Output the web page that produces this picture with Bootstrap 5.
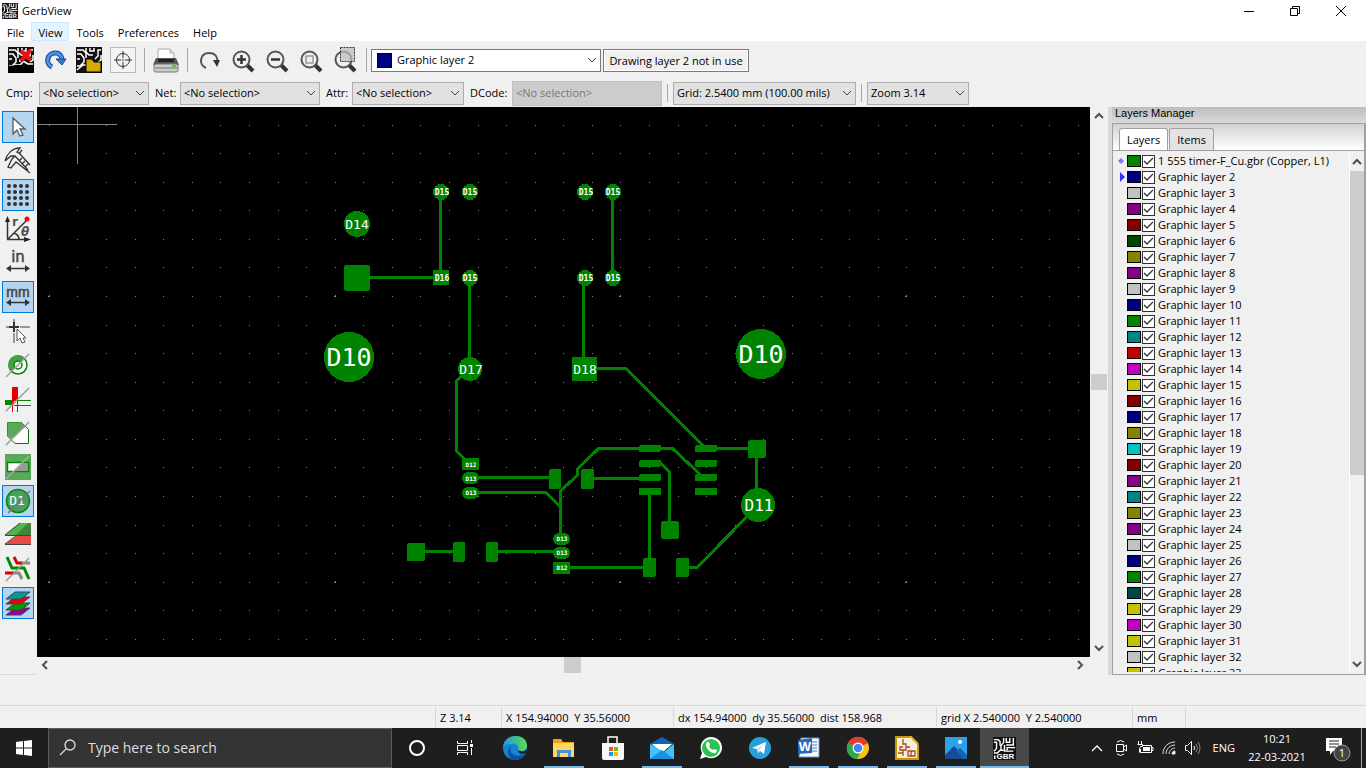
<!DOCTYPE html>
<html lang="en">
<head>
<meta charset="utf-8">
<meta name="viewport" content="width=device-width, initial-scale=1">
<title>GerbView</title>
<link href="https://cdn.jsdelivr.net/npm/bootstrap@5.3.0/dist/css/bootstrap.min.css" rel="stylesheet">
<style>
  body { font-family: "Open Sans", "Noto Sans", sans-serif; font-size: 11px; line-height: 16px; color: #000; background: #f0f0f0; }
  button { color: inherit; }
  svg { display: block; }
  .title-row { height: 22px; padding: 0 2px; }
  .win-btn { width: 46px; height: 22px; }
  .menu-row { height: 19px; }
  .menu-row a { color: #000; text-decoration: none; height: 19px; line-height: 22px; padding: 0 7px; }
  .menu-row li:nth-child(2) a { background: #e5f3ff; box-shadow: inset 0 0 0 1px #cce8ff; }
  .tool-row { height: 38px; padding-left: 4px; }
  .tool-btn { width: 34px; height: 34px; }
  .vline { width: 1px; background: #a8a8a8; }
  .tool-row .vline { height: 24px; }
  .filter-row { height: 28px; }
  .filter-row .vline { height: 18px; margin: 0 5px; }
  .form-select { font-size: 11px; line-height: 16px; height: 23px; padding: 0 20px 0 3px; color: #000; border: 1px solid #adadad; border-radius: 0; background-color: #e1e1e1; background-position: right 3px center; background-size: 10px 10px;
    background-image: url("data:image/svg+xml,%3Csvg xmlns='http://www.w3.org/2000/svg' viewBox='0 0 10 10'%3E%3Cpath d='M1 3l4 4 4-4' fill='none' stroke='%23444'/%3E%3C/svg%3E"); }
  .form-select:disabled { background-color: #ccc; border-color: #bfbfbf; color: #777; background-image: none; height: 25px; }
  .layer-pick { width: 230px; }
  .layer-pick .form-select { background-color: #fff; border-color: #7a7a7a; padding-left: 25px; }
  .layer-pick .chip { left: 6px; top: 4px; width: 15px; height: 15px; background: #000084; border: 1px solid #000; }
  .layer-note { border: 1px solid #7a7a7a; box-shadow: inset 0 0 0 1px #fff; height: 23px; width: 146px; line-height: 21px; margin-left: 2px; }
  .w110 { width: 110px; } .w140 { width: 140px; } .w112 { width: 112px; } .w150 { width: 150px; } .w183 { width: 183px; } .w102 { width: 102px; }
  .lab { padding-left: 6px; white-space: nowrap; }
  .lab-cmp { width: 39px; } .lab-net { width: 31px; } .lab-attr { width: 32px; } .lab-dcode { width: 48px; }
  .side-tools { width: 37px; padding: 4px 0 0 2px; gap: 2px; border-bottom: 1px solid #d9d9d9; }
  .side-tools button { width: 32px; height: 32px; padding: 2px; background: none; border: 1px solid transparent; }
  .side-tools svg { overflow: visible; }
  .side-tools .on { background: #b4d5f2; border-color: #0078d7; }
  .board { background: #000; }
  .board text { font-family: "DejaVu Sans Mono", monospace; fill: #fff; text-anchor: middle; }
  .sb-v { width: 18px; padding: 4px 1px; }
  .sb-h { height: 18px; padding: 0 4px; }
  .thumb { background: #cdcdcd; }
  .thumb-v { height: 16px; } .thumb-h { width: 17px; height: 16px; } .thumb-list { height: 59%; }
  .manager { width: 258px; border-left: 4px solid #d8d8d8; }
  .caption-bar { height: 16px; padding-left: 3px; line-height: 13px; font-family: "Liberation Sans", Arial, sans-serif; font-size: 11px; background: linear-gradient(#bdbdbd, #dadada); }
  .panel-frame { border: 1px solid #a0a0a0; border-right-width: 2px; }
  .tab-strip { height: 27px; padding: 4px 0 0 6px; background: linear-gradient(#d2d2d2, #fff); border-bottom: 1px solid #a0a0a0; gap: 1px; }
  .tab-strip button { border: 1px solid #a0a0a0; border-bottom: 0; border-radius: 3px 3px 0 0; background: #e3e3e3; height: 22px; padding: 0 7px; line-height: 20px; }
  .tab-strip .active { background: #fff; }
  .list-area { padding: 2px 0; }
  .layer-row { height: 16px; padding-left: 5px; }
  .layer-row .tick-mark { width: 9px; height: 16px; }
  .layer-row .chip { width: 14px; height: 12px; border: 1px solid #000; margin-right: 1px; }
  .layer-row input { appearance: none; width: 13px; height: 13px; margin: 0 3px 0 0; border: 1px solid #333; background: #fff url("data:image/svg+xml,%3Csvg xmlns='http://www.w3.org/2000/svg' viewBox='0 0 11 11'%3E%3Cpath d='M1 5l3 3 6-6' fill='none' stroke='%23333' stroke-width='1.3'/%3E%3C/svg%3E"); }
  .list-bar { width: 15px; border-left: 1px solid #fff; padding-top: 4px; }
  .status-row { height: 23px; margin-top: 30px; border-top: 1px solid #d7d7d7; }
  .status-row div { border-left: 1px solid #d7d7d7; padding: 3px 4px 0; margin-top: 1px; white-space: pre; height: 20px; }
  .s66 { width: 66px; } .s172 { width: 172px; } .s263 { width: 263px; } .s197 { width: 196px; } .s53 { width: 53px; } .s181 { width: 181px; }
  .task-row { height: 40px; background: #1e1e1e; color: #fff; }
  .task-btn { width: 49px; height: 40px; }
  .task-btn.run { background: linear-gradient(#76b9ed, #76b9ed) center bottom / 40px 2px no-repeat; }
  .task-btn.now { background: linear-gradient(#76b9ed, #76b9ed) center bottom / 100% 2px no-repeat #484848; }
  .start-btn { width: 48px; }
  .search-box { width: 344px; background: #333; border: 1px solid #5a5a5a; padding-left: 10px; }
  .search-box input { font-size: 14px; color: #ddd; background: none; padding-left: 11px; }
  .search-box input::placeholder { color: #ddd; opacity: 1; }
  .tray-btn { width: 24px; height: 40px; }
  .clock { width: 76px; text-align: center; line-height: 18px; }
</style>
</head>
<body class="vh-100 overflow-hidden d-flex flex-column">

<svg class="d-none">
  <symbol id="pcb" viewBox="0 0 26 26">
    <rect width="26" height="26" fill="#111"/>
    <path d="M1 3h6l3 3v5M1 7h4l3 4v4l-4 4H1M1 12h3M10 1v4l3 3h4M14 1v3h4V1M25 3h-3v6l-3 3M25 8v5l-3 2M25 17h-5l-5-3M1 23l6-5h5l3-3M12 12v3" fill="none" stroke="#fff" stroke-width="1.500"/>
  </symbol>
  <symbol id="gbr" viewBox="0 0 26 26">
    <rect width="26" height="26" fill="#111"/>
    <path d="M1 3h5l2 2v5M1 6h3v7l-3 3M12 1v5l-3 4v5M15 1v5h4V1M23 1v8h-8M25 12h-9v3M1 18h4l3-3h4M13 9v7h10M2 21v4" fill="none" stroke="#fff" stroke-width="1.600"/>
    <text x="14" y="25" font-family="Liberation Sans, sans-serif" font-size="9" font-weight="700" text-anchor="middle" fill="#fff">GBR</text>
  </symbol>
  <symbol id="up" viewBox="0 0 16 16"><path d="M4 10l4-4 4 4" fill="none" stroke="#505050" stroke-width="2"/></symbol>
  <symbol id="down" viewBox="0 0 16 16"><path d="M4 6l4 4 4-4" fill="none" stroke="#505050" stroke-width="2"/></symbol>
  <symbol id="left" viewBox="0 0 16 16"><path d="M10 4L6 8l4 4" fill="none" stroke="#505050" stroke-width="2"/></symbol>
  <symbol id="right" viewBox="0 0 16 16"><path d="M6 4l4 4-4 4" fill="none" stroke="#505050" stroke-width="2"/></symbol>
  <symbol id="lens" viewBox="0 0 26 26"><path d="M17 18l6 6" stroke="#333" stroke-width="4"/><circle cx="11.500" cy="12.500" r="8" fill="#f0f0f0" stroke="#545454" stroke-width="2"/></symbol>
</svg>

<header class="bg-white flex-shrink-0">
  <div class="title-row d-flex align-items-center">
    <svg class="me-1" width="16" height="16"><use href="#gbr"/></svg>
    <span class="flex-grow-1">GerbView</span>
    <button class="win-btn btn p-0 border-0 rounded-0 d-flex align-items-center justify-content-center" aria-label="Minimize"><svg width="12" height="12"><path d="M1 6.500h10" stroke="#000"/></svg></button>
    <button class="win-btn btn p-0 border-0 rounded-0 d-flex align-items-center justify-content-center" aria-label="Restore"><svg width="12" height="12" fill="none" stroke="#000"><path d="M1.500 3.500h7v7h-7zM3.500 3v-1.500h7v7H9"/></svg></button>
    <button class="win-btn btn p-0 border-0 rounded-0 d-flex align-items-center justify-content-center" aria-label="Close"><svg width="12" height="12"><path d="M1 1l10 10M11 1L1 11" stroke="#000"/></svg></button>
  </div>
  <ul class="menu-row list-unstyled d-flex m-0">
    <li><a class="d-block" href="#">File</a></li><li><a class="d-block" href="#">View</a></li><li><a class="d-block" href="#">Tools</a></li><li><a class="d-block" href="#">Preferences</a></li><li><a class="d-block" href="#">Help</a></li>
  </ul>
</header>

<div class="tool-row d-flex align-items-center flex-shrink-0">
  <button class="tool-btn btn p-1 border-0" aria-label="Clear all layers"><svg width="26" height="26"><use href="#pcb"/><path d="M0 19q5 0 7-1h19v8H0z" fill="#000"/><path d="M13 4l10 9M23 3L13 14" stroke="#e11" stroke-width="4"/></svg></button>
  <button class="tool-btn btn p-1 border-0" aria-label="Reload"><svg width="26" height="26"><path d="M10 20C2 16 6 5 14 6c4 0 6 4 6 7" fill="none" stroke="#164a9c" stroke-width="5"/><path d="M10 20C2 16 6 5 14 6c4 0 6 4 6 7" fill="none" stroke="#4a90e8" stroke-width="3"/><path d="M14 12h10l-4 6z" fill="#3478d8" stroke="#164a9c"/></svg></button>
  <button class="tool-btn btn p-1 border-0" aria-label="Open Gerber file"><svg width="26" height="26"><use href="#pcb"/><path d="M10 12h6l2 3h7v10H10z" fill="#d4aa00" stroke="#000"/></svg></button>
  <button class="tool-btn btn p-1 border-0" aria-label="Open drill file"><svg width="26" height="26" fill="none" stroke="#333"><path d="M.5.5h25v25H.5z" fill="#f3f3f3" stroke="#b8b8b8"/><circle cx="13" cy="13" r="6.500"/><path d="M4 13h7M15 13h7M13 4v7M13 15v7M12 13h2"/></svg></button>
  <span class="vline mx-1"></span>
  <button class="tool-btn btn p-1 border-0" aria-label="Print"><svg width="26" height="26"><path d="M5 11V2h12l4 4v7" fill="#fff" stroke="#aaa"/><path d="M17 2v4h4" fill="#ddd" stroke="#aaa"/><path d="M3 11h20l3 7H0z" fill="#555"/><path d="M5 12h16v3H5z" fill="#222"/><rect x="1" y="17" width="24" height="8" rx="2" fill="#ccc" stroke="#777"/><path d="M2 21h22" stroke="#777"/><path d="M19 19h4" stroke="#5c2" stroke-width="2"/></svg></button>
  <span class="vline mx-1"></span>
  <button class="tool-btn btn p-1 border-0" aria-label="Redraw"><svg width="26" height="26"><path d="M10 21C2 18 4 6 13 6c7 0 9 5 8 9" fill="none" stroke="#545454" stroke-width="2"/><path d="M17 13h7l-3 7z" fill="#333"/></svg></button>
  <button class="tool-btn btn p-1 border-0" aria-label="Zoom in"><svg width="26" height="26"><use href="#lens"/><path d="M7 12.500h9M11.500 8v9" stroke="#333" stroke-width="2.500"/></svg></button>
  <button class="tool-btn btn p-1 border-0" aria-label="Zoom out"><svg width="26" height="26"><use href="#lens"/><path d="M7 12.500h9" stroke="#333" stroke-width="2.500"/></svg></button>
  <button class="tool-btn btn p-1 border-0" aria-label="Zoom to fit"><svg width="26" height="26"><use href="#lens"/><path d="M8 9h7v7H8z" fill="#eee" stroke="#999" stroke-width="1.500"/></svg></button>
  <button class="tool-btn btn p-1 border-0" aria-label="Zoom to selection"><svg width="26" height="26"><use href="#lens"/><path d="M8.500.5h14v14h-14z" fill="#bbb" fill-opacity=".7" stroke="#333" stroke-dasharray="2 1"/></svg></button>
  <span class="vline mx-1"></span>
  <div class="layer-pick position-relative">
    <select class="form-select" aria-label="Active layer"><option>Graphic layer 2</option></select>
    <span class="chip position-absolute"></span>
  </div>
  <div class="layer-note text-center text-nowrap">Drawing layer 2 not in use</div>
</div>

<div class="filter-row d-flex align-items-center flex-shrink-0">
  <label class="lab lab-cmp" for="cmp">Cmp:</label><select id="cmp" class="form-select w110"><option>&lt;No selection&gt;</option></select>
  <label class="lab lab-net" for="net">Net:</label><select id="net" class="form-select w140"><option>&lt;No selection&gt;</option></select>
  <label class="lab lab-attr" for="attr">Attr:</label><select id="attr" class="form-select w112"><option>&lt;No selection&gt;</option></select>
  <label class="lab lab-dcode" for="dcode">DCode:</label><select id="dcode" class="form-select w150" disabled><option>&lt;No selection&gt;</option></select>
  <span class="vline"></span>
  <select class="form-select w183" aria-label="Grid"><option>Grid: 2.5400 mm (100.00 mils)</option></select>
  <span class="vline"></span>
  <select class="form-select w102" aria-label="Zoom"><option>Zoom 3.14</option></select>
</div>

<main class="d-flex flex-fill overflow-hidden">
  <div class="side-tools d-flex flex-column flex-shrink-0">
    <button class="on" aria-label="Select"><svg width="26" height="26"><path d="M8 4v16l4-4 3 6 3-1-3-6h5z" fill="#fff" stroke="#555" stroke-width="1.300"/></svg></button>
    <button aria-label="Measure"><svg width="26" height="26" fill="none" stroke="#333" stroke-width="1.300"><path d="M0 13C2 6 7 0 15 0l-3 4 3 2 10 11M0 13l6-5h4l13 14M10 8L7 11l-4 8 3 1 5-6 14 11M17 2l-3 4M14 13l3-3M17 16l3-3M20 19l3-3"/></svg></button>
    <button class="on" aria-label="Show grid"><svg width="26" height="26"><path d="M4 4h19M4 10h19M4 16h19M4 22h19" stroke="#333" stroke-width="4" stroke-linecap="round" stroke-dasharray="0 6"/></svg></button>
    <button aria-label="Polar coordinates"><svg width="26" height="26"><path d="M2.500 23V3M2 23.500h21M3 23L22 4M9 17q5 2 5 6" fill="none" stroke="#333" stroke-width="1.500"/><path d="M0 6l2.500-6L5 6zM19 21l7 2.500-7 2.500z" fill="#222"/><circle cx="22" cy="3" r="2.500" fill="#f00"/><text x="7" y="10" font-family="DejaVu Sans" font-size="12" font-weight="700" fill="#555">r</text><text x="16" y="20" font-family="DejaVu Sans" font-size="12" font-weight="700" font-style="italic" fill="#555">θ</text></svg></button>
    <button aria-label="Inches"><svg width="26" height="26"><text x="13" y="12" text-anchor="middle" font-family="DejaVu Sans" font-size="15" fill="#444" stroke="#444" stroke-width=".5">in</text><path d="M3 18.500h20" stroke="#333" stroke-width="1.500"/><path d="M6 15l-5 3.500L6 22zM20 15l5 3.500-5 3.500z" fill="#333"/></svg></button>
    <button class="on" aria-label="Millimeters"><svg width="26" height="26"><text x="13" y="13" text-anchor="middle" font-family="Liberation Sans" font-size="14" fill="#444" stroke="#444" stroke-width=".5">mm</text><path d="M3 18.500h20" stroke="#333" stroke-width="1.500"/><path d="M6 15l-5 3.500L6 22zM20 15l5 3.500-5 3.500z" fill="#333"/></svg></button>
    <button aria-label="Cursor shape"><svg width="26" height="26"><path d="M9 1v3M9 15v10M1 9h3M15 9h10" stroke="#999" stroke-width="2"/><path d="M9 4v10M4 9h10" stroke="#333" stroke-width="2"/><path d="M12 11v12l3-3 2 5 3-1-2-4h3z" fill="#fff" stroke="#555"/></svg></button>
    <button aria-label="Sketch flashed items"><svg width="26" height="26"><circle cx="13" cy="13" r="9" fill="#fff" stroke="#0b840b" stroke-width="1.500"/><path d="M6 20A9 9 0 0 1 20 6z" fill="#46a046"/><circle cx="13" cy="13" r="4" fill="#e8f3e8" stroke="#0b840b" stroke-width="1.500"/><path d="M1 25L24 2" stroke="#a0a0a0" stroke-width="1.500"/></svg></button>
    <button aria-label="Sketch lines"><svg width="26" height="26"><path d="M0 14h9v5H0z" fill="#080"/><path d="M9 14.500h17M9 19.500h17" stroke="#080"/><path d="M7 1h6v14H7z" fill="#d00"/><path d="M7.500 14v12M12.500 14v12" stroke="#d00"/><path d="M1 25L24 2" stroke="#999" stroke-width="1.500"/></svg></button>
    <button aria-label="Sketch polygons"><svg width="26" height="26"><path d="M2.500 2.500h14l7 7v14H10l-7.500-7.500z" fill="#fff" stroke="#0b770b"/><path d="M2.500 2.500h14l4 4L6 19l-3.500-3z" fill="#5aa95a"/><path d="M1 25L24 2" stroke="#999" stroke-width="1.500"/></svg></button>
    <button aria-label="Negative objects"><svg width="26" height="26"><path d="M0 0h26v26H0z" fill="#5aa95a"/><path d="M2.500 8.500h21v9h-21z" fill="#fff" stroke="#080" stroke-width="1.500"/><path d="M17 9h6v8H9z" fill="#999"/><path d="M1 25L24 2" stroke="#aaa" stroke-width="1.500"/></svg></button>
    <button class="on" aria-label="Show DCodes"><svg width="26" height="26"><circle cx="13" cy="13" r="11.500" fill="#46a060" stroke="#0b840b" stroke-width="1.500"/><text x="12" y="17" text-anchor="middle" font-family="DejaVu Sans Mono" font-size="13" fill="#fff">D1</text><path d="M3 25L25 3" stroke="#777" stroke-width="1.500"/></svg></button>
    <button aria-label="Diff mode"><svg width="26" height="26"><path d="M13 13h13v9H0z" fill="#e84848"/><path d="M0 22.500h26M0 22l12-9" stroke="#444"/><path d="M15 1h11v12H0z" fill="#44843c"/><path d="M15 1h8L11 13H0z" fill="#4db848"/><path d="M0 13.500h26M0 13L15 1" stroke="#444"/></svg></button>
    <button aria-label="XOR mode"><svg width="26" height="26" fill="none" stroke-width="3"><path d="M9 1l3 6h5M0 17h9" stroke="#d00"/><path d="M17 7h8M9 17h5l3 6" stroke="#888"/><path d="M2 1l5 11h12l5 11" stroke="#080"/><path d="M1 25L24 2" stroke="#999" stroke-width="1.500"/></svg></button>
    <button class="on" aria-label="Layers manager"><svg width="26" height="26" stroke="#444"><path d="M1 25l9-7h15l-9 7z" fill="#909"/><path d="M1 20l9-7h15l-9 7z" fill="#090"/><path d="M1 14l9-7h15l-9 7z" fill="#e00"/><path d="M1 9l9-7h15l-9 7z" fill="#009c9c"/></svg></button>
  </div>

  <div class="d-flex flex-column flex-grow-1 overflow-hidden">
    <div class="d-flex flex-grow-1 overflow-hidden">
      <div class="board flex-grow-1 overflow-hidden">
        <svg width="100%" height="100%" viewBox="37 107 1053 550" preserveAspectRatio="xMinYMin meet" shape-rendering="crispEdges">
          <g id="dots" fill="#848484"></g>
          <path d="M77.500 107v57M37 124.500h80" stroke="#848484"/>
          <g fill="none" stroke="#008400" stroke-width="3">
            <path d="M440.500 192v86M370 277.500h71M469.500 278v91M583.500 278v80M612.500 192v86"/>
            <path d="M469 369l-12.500 12v70l13 13M597 368.500h29l80 80h50.500v57M470 477.500h85M470 492.500h76l14 14"/>
            <path d="M560.500 539v-48l17-16v-6l21-20.500h74l31 29M587 478.500h63M650 463.500h11l8.500 8.500v58M649.500 492v75M561 567.500h89M682 567.500h15l61-62M416 551.500h43M492 551.500h70"/>
          </g>
          <g fill="#008400">
            <circle cx="441" cy="192" r="8"/><circle cx="470" cy="192" r="8"/><circle cx="585" cy="192" r="8"/><circle cx="613" cy="192" r="8"/>
            <circle cx="470" cy="278" r="8"/><circle cx="585" cy="278" r="8"/><circle cx="613" cy="278" r="8"/>
            <rect x="433" y="270" width="16" height="15"/><circle cx="357" cy="224" r="13"/><rect x="344" y="265" width="26" height="26" rx="3"/>
            <circle cx="349" cy="357" r="25"/><circle cx="761" cy="354" r="25"/><circle cx="470" cy="369" r="12"/><rect x="572" y="357" width="25" height="24"/><circle cx="758" cy="505" r="17"/>
            <rect x="462" y="458" width="17" height="12"/><rect x="462" y="472" width="17" height="12" rx="6"/><rect x="462" y="487" width="17" height="12" rx="6"/>
            <rect x="553" y="533" width="17" height="12" rx="6"/><rect x="553" y="547" width="17" height="12" rx="6"/><rect x="553" y="562" width="17" height="12"/>
            <rect x="549" y="469" width="12" height="20" rx="2"/><rect x="581" y="469" width="13" height="20" rx="2"/>
            <rect x="639" y="445" width="22" height="7" rx="2"/><rect x="639" y="460" width="22" height="7" rx="2"/><rect x="639" y="474" width="22" height="7" rx="2"/><rect x="639" y="488" width="22" height="7"/>
            <rect x="695" y="445" width="22" height="7" rx="2"/><rect x="695" y="460" width="22" height="7" rx="2"/><rect x="695" y="474" width="22" height="7" rx="2"/><rect x="695" y="488" width="22" height="7" rx="1"/>
            <rect x="748" y="440" width="18" height="18" rx="2"/><rect x="661" y="521" width="18" height="18" rx="3"/><rect x="407" y="543" width="18" height="18" rx="2"/>
            <rect x="453" y="542" width="12" height="20" rx="2"/><rect x="486" y="542" width="12" height="20" rx="2"/><rect x="643" y="558" width="13" height="19" rx="2"/><rect x="676" y="558" width="13" height="19" rx="2"/>
          </g>
          <g font-size="25"><text x="349" y="366">D10</text><text x="761" y="363">D10</text></g>
          <g font-size="13"><text x="471" y="374">D17</text><text x="585" y="374">D18</text><text x="357" y="229">D14</text></g>
          <text x="759" y="511" font-size="16">D11</text>
          <g font-size="8" font-weight="700">
            <text x="442" y="195">D15</text><text x="470" y="195">D15</text><text x="586" y="195">D15</text><text x="613" y="195">D15</text>
            <text x="442" y="281">D16</text><text x="470" y="281">D15</text><text x="586" y="281">D15</text><text x="613" y="281">D15</text>
          </g>
          <g font-size="6" font-weight="700">
            <text x="471" y="467">D12</text><text x="471" y="481">D13</text><text x="471" y="495">D13</text>
            <text x="562" y="541">D13</text><text x="562" y="555">D13</text><text x="562" y="570">D12</text>
          </g>
        </svg>
      </div>
      <div class="sb-v d-flex flex-column justify-content-between flex-shrink-0">
        <svg width="16" height="10" viewBox="0 3 16 10"><use href="#up" width="16" height="16"/></svg><span class="thumb thumb-v"></span><svg width="16" height="10" viewBox="0 3 16 10"><use href="#down" width="16" height="16"/></svg>
      </div>
    </div>
    <div class="sb-h d-flex justify-content-between flex-shrink-0 me-3">
      <svg width="8" height="16" viewBox="4 0 8 16"><use href="#left" width="16" height="16"/></svg><span class="thumb thumb-h ms-4"></span><svg width="16" height="16"><use href="#right"/></svg>
    </div>
  </div>

  <aside class="manager d-flex flex-column flex-shrink-0">
    <div class="caption-bar flex-shrink-0">Layers Manager</div>
    <div class="panel-frame d-flex flex-column flex-grow-1 overflow-hidden">
      <div class="tab-strip d-flex flex-shrink-0" role="tablist"><button class="active" role="tab">Layers</button><button role="tab">Items</button></div>
      <div class="list-area d-flex flex-grow-1 overflow-hidden">
        <ul id="layers" class="list-unstyled m-0 flex-grow-1 overflow-hidden"></ul>
        <div class="list-bar d-flex flex-column flex-shrink-0"><svg width="14" height="14" viewBox="1 3 14 14"><use href="#up" width="16" height="16"/></svg><span class="thumb thumb-list"></span><svg class="mt-auto" width="14" height="16" viewBox="1 0 14 16"><use href="#down" width="16" height="16"/></svg></div>
      </div>
    </div>
  </aside>
</main>

<footer class="flex-shrink-0">
  <div class="status-row d-flex">
    <div class="flex-grow-1 border-0"></div><div class="s66">Z 3.14</div><div class="s172">X 154.94000  Y 35.56000</div><div class="s263">dx 154.94000  dy 35.56000  dist 158.968</div><div class="s197">grid X 2.540000  Y 2.540000</div><div class="s53">mm</div><div class="s181"></div>
  </div>
  <nav class="task-row d-flex align-items-stretch">
    <button class="start-btn btn p-0 border-0 rounded-0 d-flex align-items-center justify-content-center" aria-label="Start"><svg width="16" height="16" fill="#fff"><path d="M0 2l7-1v6.500H0zM8 1l8-1v7.500H8zM0 8.500h7V15l-7-1zM8 8.500h8V16l-8-1z"/></svg></button>
    <label class="search-box d-flex align-items-center"><svg width="18" height="18" fill="none" stroke="#ddd" stroke-width="1.300"><circle cx="11" cy="6" r="5"/><path d="M7 10l-6 6"/></svg><input class="border-0 flex-grow-1" type="text" placeholder="Type here to search" aria-label="Search"></label>
    <button class="task-btn btn p-0 rounded-0 border-0 d-flex align-items-center justify-content-center" aria-label="Cortana"><svg width="18" height="18"><circle cx="9" cy="9" r="7" fill="none" stroke="#fff" stroke-width="2"/></svg></button>
    <button class="task-btn btn p-0 rounded-0 border-0 d-flex align-items-center justify-content-center" aria-label="Task view"><svg width="20" height="18" fill="none" stroke="#fff"><path d="M1.500 2v2.500h10V2M1.500 16v-2.500h10V16M1.500 6.500h10v5h-10zM15.500 1v3M15.500 9v7"/><path d="M14 5h3v3h-3z" fill="#fff" stroke="none"/></svg></button>
    <button class="task-btn btn p-0 rounded-0 border-0 d-flex align-items-center justify-content-center" aria-label="Edge"><svg width="24" height="24"><defs><linearGradient id="eg"><stop stop-color="#1a9be0"/><stop offset="1" stop-color="#5fdc50"/></linearGradient></defs><circle cx="12" cy="12" r="12" fill="#1583d8"/><path d="M0 11C1-3 24-4 24 10c0 5-7 7-9 4 2-4-2-7-6-6-4 0-8 1-9 3z" fill="url(#eg)"/><path d="M8 10c-3 6 3 13 14 8-3 5-8 6-11 6-6-1-8-10-3-14z" fill="#0c4f9c"/><path d="M15 14c0 4 5 5 8 3l1-4c-2 3-6 3-9 1z" fill="#1e1e1e"/></svg></button>
    <button class="task-btn run btn p-0 rounded-0 border-0 d-flex align-items-center justify-content-center" aria-label="File Explorer"><svg width="24" height="24"><path d="M1 3h8l2 3h11v15H1z" fill="#e8a60c"/><path d="M1 7h21v14H1z" fill="#fcd765"/><path d="M5 21v-7h14v7h-3v-4H8v4z" fill="#3e96dc"/></svg></button>
    <button class="task-btn btn p-0 rounded-0 border-0 d-flex align-items-center justify-content-center" aria-label="Store"><svg width="24" height="24"><path d="M7 7V1h9v6" fill="none" stroke="#fff" stroke-width="1.500"/><path d="M1 7h22v15q0 2-2 2H3q-2 0-2-2z" fill="#f8f8f8"/><path d="M8 11h4v4H8z" fill="#f25022"/><path d="M13 11h4v4h-4z" fill="#7fba00"/><path d="M8 16h4v4H8z" fill="#00a4ef"/><path d="M13 16h4v4h-4z" fill="#ffb900"/></svg></button>
    <button class="task-btn run btn p-0 rounded-0 border-0 d-flex align-items-center justify-content-center" aria-label="Mail"><svg width="24" height="24"><path d="M0 8l12-7 12 7v4H0z" fill="#0f66b8"/><path d="M2 8h20l-10 9z" fill="#fff"/><path d="M0 8l14 8 10-8v15H0z" fill="#40c4f5"/><path d="M0 23l12-9 12 9z" fill="#1a8fe0"/></svg></button>
    <button class="task-btn btn p-0 rounded-0 border-0 d-flex align-items-center justify-content-center" aria-label="WhatsApp"><svg width="24" height="24"><path d="M1 23l2-6C-1 8 5 1 12 1s11 5 11 11-7 13-16 9z" fill="#fff"/><circle cx="12" cy="12" r="9" fill="#25c552"/><path d="M8 6c-4 4 4 13 9 11l1-3-3-1-1 1c-2-1-3-2-4-4l1-1-1-3z" fill="#fff"/></svg></button>
    <button class="task-btn btn p-0 rounded-0 border-0 d-flex align-items-center justify-content-center" aria-label="Telegram"><svg width="24" height="24"><circle cx="12" cy="12" r="11" fill="#279fda"/><path d="M4 12l14-6-2 12-4-3-2 2-1-4z" fill="#fff"/><path d="M9 13l7-5-5 6-1 3z" fill="#b8d8ec"/></svg></button>
    <button class="task-btn run btn p-0 rounded-0 border-0 d-flex align-items-center justify-content-center" aria-label="Word"><svg width="24" height="24"><path d="M4 2h18v19H2z" fill="#f5f9ff" stroke="#6a94c8"/><path d="M14 6h6M14 9h6M14 12h6M13 15h7" stroke="#4a7ab8"/><path d="M1 4l14-2v15L1 18z" fill="#2b67b8"/><text x="8" y="15" text-anchor="middle" font-family="Liberation Sans" font-size="13" font-weight="700" fill="#fff">W</text></svg></button>
    <button class="task-btn run btn p-0 rounded-0 border-0 d-flex align-items-center justify-content-center" aria-label="Chrome"><svg width="24" height="24"><circle cx="12" cy="12" r="11" fill="#fbc116"/><path d="M12 12L2 7C6-1 18-1 22 7z" fill="#e33b2e"/><path d="M12 12L2 7c-4 8 2 16 9 16l5-9z" fill="#2da94f"/><circle cx="12" cy="12" r="5.500" fill="#fff"/><circle cx="12" cy="12" r="4.300" fill="#4285f4"/></svg></button>
    <button class="task-btn run btn p-0 rounded-0 border-0 d-flex align-items-center justify-content-center" aria-label="KiCad schematic"><svg width="24" height="24"><path d="M1 1h22v22H1z" fill="#f7efdc" stroke="#c99700" stroke-width="2"/><path d="M15 0h9v9z" fill="#222"/><path d="M15 0l8 8" stroke="#e8b800" stroke-width="2"/><path d="M8 3v5h3v6H5v-3h3M8 14v6M3 17h5M11 11h4M13 15h7v5h-7zM16 15v5" fill="none" stroke="#a5492c" stroke-width="1.300"/></svg></button>
    <button class="task-btn run btn p-0 rounded-0 border-0 d-flex align-items-center justify-content-center" aria-label="Photos"><svg width="24" height="24"><path d="M1 1h22v22H1z" fill="#2aa3ea"/><path d="M1 19l9-9 13 13H1z" fill="#174c94"/><path d="M12 15l4-3 7 7v4h-4z" fill="#1464b4"/><circle cx="16" cy="6" r="2" fill="#fff"/></svg></button>
    <button class="task-btn now btn p-0 rounded-0 border-0 d-flex align-items-center justify-content-center" aria-label="GerbView"><svg width="23" height="23"><use href="#gbr"/></svg></button>
    <div class="d-flex align-items-center ms-auto">
      <button class="tray-btn btn p-0 border-0 d-flex align-items-center justify-content-center" aria-label="Hidden icons"><svg width="14" height="14"><path d="M2 10l5-5 5 5" fill="none" stroke="#fff" stroke-width="1.300"/></svg></button>
      <button class="tray-btn btn p-0 border-0 d-flex align-items-center justify-content-center" aria-label="Meet now"><svg width="14" height="16" fill="none" stroke="#fff"><path d="M2.500 4.500h7v7h-7zM9.500 7l3-2v6l-3-2M3 2q4-3 7 0M3 14q4 3 7 0"/></svg></button>
      <button class="tray-btn btn p-0 border-0 d-flex align-items-center justify-content-center" aria-label="Battery"><svg width="18" height="16" fill="none" stroke="#fff"><path d="M6 5.500h9.500v7H4.500V9M16 7.500h1v3h-1"/><path d="M7 7h7v4H7z" fill="#fff" stroke="none"/><path d="M2.500 1v3M5.500 1v3M1.500 4.500h5v2h-2l-1 2v4"/></svg></button>
      <button class="tray-btn btn p-0 border-0 d-flex align-items-center justify-content-center" aria-label="Wi-Fi"><svg width="16" height="16" fill="none" stroke="#ddd"><path d="M2 14C2 7 7 2 14 2M5 14c0-5 4-9 9-9M8 14c0-3 3-6 6-6"/><path d="M11 14c0-2 1-3 3-3v3z" fill="#fff"/></svg></button>
      <button class="tray-btn btn p-0 border-0 d-flex align-items-center justify-content-center" aria-label="Volume"><svg width="18" height="16" fill="none" stroke="#fff"><path d="M1.500 5.500h2l4-4v13l-4-4h-2z"/><path d="M10 6q1 2 0 4"/><path d="M12 4q3 4 0 8M14 2q4 6 0 12" stroke="#888"/></svg></button>
      <span class="ms-1 px-1">ENG</span>
      <div class="clock">10:21<br>22-03-2021</div>
      <button class="btn p-0 border-0 mx-2" aria-label="Notifications"><svg width="30" height="30"><path d="M3 5h16v13H10l-3 4v-4H3z" fill="#fff"/><path d="M6 8h10M6 11h10M6 14h7" stroke="#222"/><circle cx="19" cy="20" r="8" fill="#444" stroke="#999"/><text x="19" y="24" text-anchor="middle" font-size="11" fill="#fff">1</text></svg></button>
      <span class="vline h-100 me-1"></span>
    </div>
  </nav>
</footer>

<script src="https://cdn.jsdelivr.net/npm/bootstrap@5.3.0/dist/js/bootstrap.bundle.min.js"></script>
<script>
  // Grid points: 2.54 mm pitch, every tenth crossing is emphasised
  let dots = '';
  for (let i = 0; i < 37; i++) for (let j = -6; j < 13; j++) {
    const x = Math.floor(49.4 + i * 28.58), y = Math.round(296 + j * 28.58);
    dots += `<rect x="${x}" y="${y}" width="1" height="1"/>`;
    if (i % 10 === 0 && j % 10 === 0) dots += `<rect x="${x - 1}" y="${y}" width="2" height="1"/><rect x="${x}" y="${y - 1}" width="1" height="1"/>`;
  }
  document.getElementById('dots').innerHTML = dots;

  const colors = ['008400','000084','c2c2c2','840084','840000','004800','848400','840084','c2c2c2','000084','008400','008484','c20000','c200c2','c2c200','840000','000084','848400','00c2c2','840000','840084','008484','848400','840084','c2c2c2','000084','008400','004848','c2c200','c200c2','c2c200','c2c2c2','c2c200'];
  const marks = ['<path d="M3 5l3 3-3 3-3-3z" fill="#7a7aff"/>', '<path d="M2 3l5 5-5 5z" fill="#33f"/>'];
  document.getElementById('layers').innerHTML = colors.map((c, i) =>
    `<li class="layer-row d-flex align-items-center"><svg class="tick-mark">${marks[i] || ''}</svg><span class="chip" style="background:#${c}"></span><input type="checkbox" id="l${i}" checked><label for="l${i}">${i ? 'Graphic layer ' + (i + 1) : '1 555 timer-F_Cu.gbr (Copper, L1)'}</label></li>`).join('');
</script>
</body>
</html>
